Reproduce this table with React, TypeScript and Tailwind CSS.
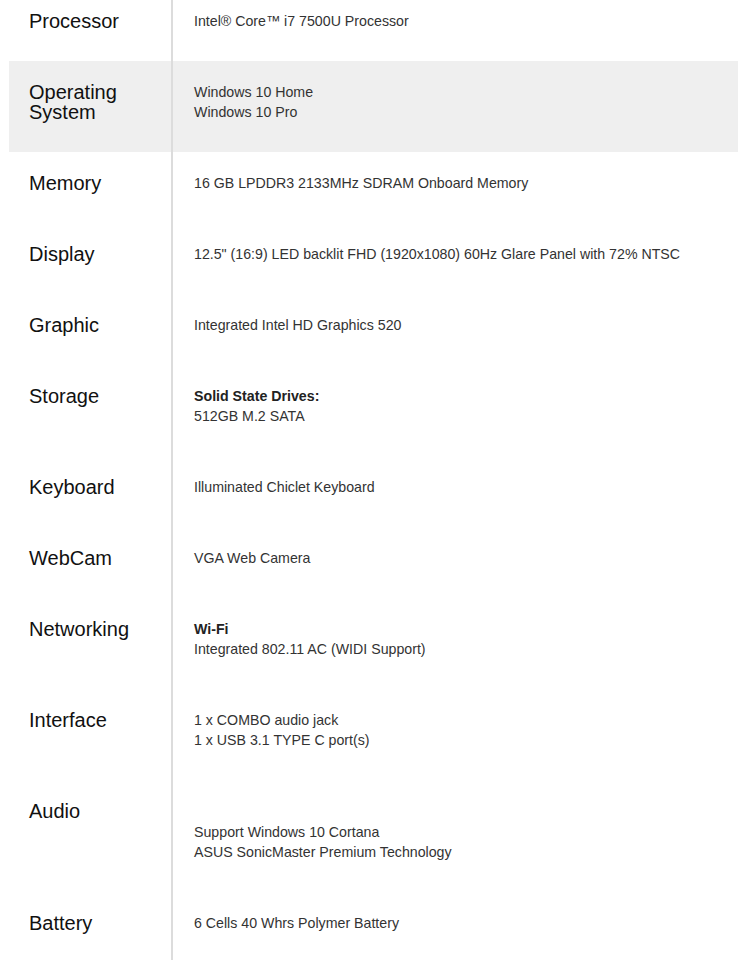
import React from "react";

type Row = { label: string[]; lines: { text: string; bold?: boolean; blank?: boolean }[]; shaded?: boolean };

const rows: Row[] = [
  { label: ["Processor"], lines: [{ text: "Intel® Core™ i7 7500U Processor" }] },
  { label: ["Operating", "System"], lines: [{ text: "Windows 10 Home" }, { text: "Windows 10 Pro" }], shaded: true },
  { label: ["Memory"], lines: [{ text: "16 GB LPDDR3 2133MHz SDRAM Onboard Memory" }] },
  { label: ["Display"], lines: [{ text: '12.5" (16:9) LED backlit FHD (1920x1080) 60Hz Glare Panel with 72% NTSC' }] },
  { label: ["Graphic"], lines: [{ text: "Integrated Intel HD Graphics 520" }] },
  { label: ["Storage"], lines: [{ text: "Solid State Drives:", bold: true }, { text: "512GB M.2 SATA" }] },
  { label: ["Keyboard"], lines: [{ text: "Illuminated Chiclet Keyboard" }] },
  { label: ["WebCam"], lines: [{ text: "VGA Web Camera" }] },
  { label: ["Networking"], lines: [{ text: "Wi-Fi", bold: true }, { text: "Integrated 802.11 AC (WIDI Support)" }] },
  { label: ["Interface"], lines: [{ text: "1 x COMBO audio jack" }, { text: "1 x USB 3.1 TYPE C port(s)" }] },
  { label: ["Audio"], lines: [{ text: "\u00a0", blank: true }, { text: "Support Windows 10 Cortana" }, { text: "ASUS SonicMaster Premium Technology" }] },
  { label: ["Battery"], lines: [{ text: "6 Cells 40 Whrs Polymer Battery" }] },
];

export default function App() {
  return (
    <div
      className="w-[738px] h-[960px] overflow-hidden bg-white"
      style={{ fontFamily: '"Liberation Sans", Arial, Helvetica, sans-serif' }}
    >
      <div className="ml-[9px] -mt-[10px]">
        {rows.map((r, i) => (
          <div key={i} className={`flex ${r.shaded ? "bg-[#efefef]" : ""}`}>
            <div className="w-[164px] shrink-0 border-r-2 border-[#dcdcdc] pl-[20px] pt-[21px] pb-[30px] text-[20px] leading-[20px] text-[#111]">
              {r.label.map((l, j) => (
                <div key={j}>{l}</div>
              ))}
            </div>
            <div className="pl-[21px] pt-[21px] pb-[30px] text-[14.2px] leading-[20px] text-[#333]">
              {r.lines.map((l, j) => (
                <div
                  key={j}
                  className={l.bold ? "font-bold text-[#222]" : l.blank ? "h-[21px]" : ""}
                >
                  {l.text}
                </div>
              ))}
            </div>
          </div>
        ))}
      </div>
    </div>
  );
}
